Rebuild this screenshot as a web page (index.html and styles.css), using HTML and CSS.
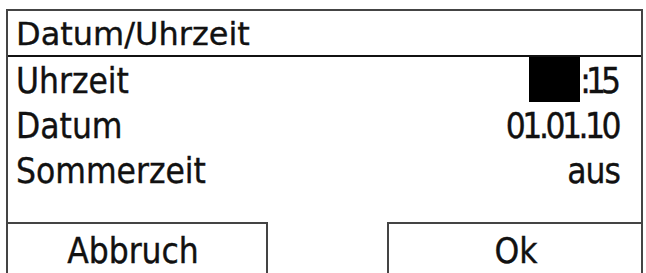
FILE: index.html
```html
<!DOCTYPE html>
<html lang="de">
<head>
<meta charset="utf-8">
<title>Datum/Uhrzeit</title>
<link rel="stylesheet" href="styles.css">
</head>
<body>
<div class="screen">
  <div class="header">Datum/Uhrzeit</div>
  <div class="list">
    <div class="row">
      <span class="label">Uhrzeit</span>
      <span class="value time"><span class="cursor"></span><span class="num">:15</span></span>
    </div>
    <div class="row">
      <span class="label">Datum</span>
      <span class="value num">01.01.10</span>
    </div>
    <div class="row">
      <span class="label">Sommerzeit</span>
      <span class="value word">aus</span>
    </div>
  </div>
  <div class="footer">
    <div class="btn btn-left">Abbruch</div>
    <div class="btn btn-right">Ok</div>
  </div>
</div>
</body>
</html>
```

FILE: styles.css
```css
html, body {
  margin: 0;
  padding: 0;
  background: #fff;
}
body {
  font-family: "DejaVu Sans Condensed", "DejaVu Sans", sans-serif;
  color: #111;
  overflow: hidden;
  -webkit-text-stroke: 0.35px #111;
}
.screen {
  margin: 9px 0 0 6px;
  width: 633px;
  border: 2px solid #444;
  border-bottom: none;
  height: 262px;
}
.header {
  height: 42px;
  padding: 2px 0 0 8px;
  border-bottom: 2px solid #111;
  font-family: "DejaVu Sans", sans-serif;
  font-size: 32px;
  line-height: 42px;
}
.list {
  height: 165px;
}
.row {
  height: 45px;
  display: flex;
  justify-content: space-between;
  align-items: stretch;
  padding: 0 21px 0 8px;
  font-size: 35px;
}
.label, .value {
  display: flex;
  align-items: center;
  padding-top: 2px;
}
.num {
  letter-spacing: -3.5px;
  margin-right: 2px;
}
.word {
  letter-spacing: -1px;
}
.time {
  padding-top: 0;
  align-items: stretch;
  margin-right: 0;
  letter-spacing: 0;
}
.time .num {
  display: flex;
  align-items: center;
  padding-top: 2px;
  letter-spacing: -5px;
  margin-right: 4px;
}
.cursor {
  width: 51px;
  background: #000;
}
.footer {
  display: flex;
  justify-content: space-between;
}
.btn {
  width: 250px;
  height: 51px;
  border-top: 2px solid #444;
  font-size: 35px;
  text-align: center;
  line-height: 54px;
}
.btn-left {
  border-right: 2px solid #444;
  padding-right: 8px;
}
.btn-right {
  border-left: 2px solid #444;
  padding-left: 2px;
}
```
